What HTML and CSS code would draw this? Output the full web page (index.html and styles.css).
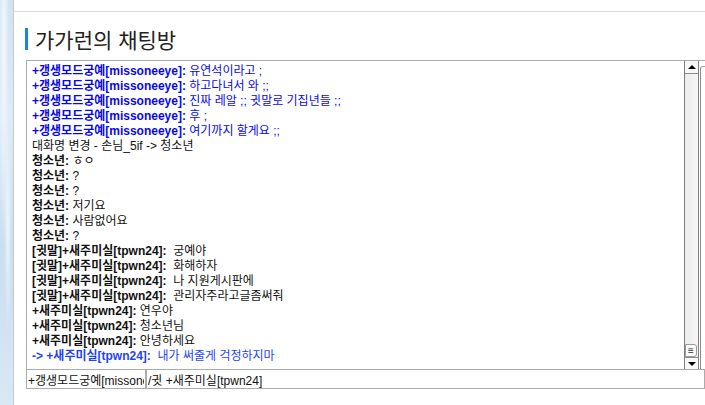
FILE: index.html
```html
<!DOCTYPE html>
<html lang="ko">
<head>
    <meta charset="UTF-8">
    <title>가가런의 채팅방</title>
    <link rel="stylesheet" href="styles.css">
</head>
<body>
    <div class="side-art"></div>
    <div class="page">
        <div class="top-bar"></div>
        <h1 class="room-title">가가런의 채팅방</h1>
        <div class="chat">
            <div class="chat-main">
                <div class="chat-log">
                    <div class="msg notice"><b>+갱생모드궁예[missoneeye]:</b> 유연석이라고 ;</div>
                    <div class="msg notice"><b>+갱생모드궁예[missoneeye]:</b> 하고다녀서 와 ;;</div>
                    <div class="msg notice"><b>+갱생모드궁예[missoneeye]:</b> 진짜 레알 ;; 귓말로 기집년들 ;;</div>
                    <div class="msg notice"><b>+갱생모드궁예[missoneeye]:</b> 후 ;</div>
                    <div class="msg notice"><b>+갱생모드궁예[missoneeye]:</b> 여기까지 할게요 ;;</div>
                    <div class="msg">대화명 변경 - 손님_5if -&gt; 청소년</div>
                    <div class="msg"><b>청소년:</b> ㅎㅇ</div>
                    <div class="msg"><b>청소년:</b> ?</div>
                    <div class="msg"><b>청소년:</b> ?</div>
                    <div class="msg"><b>청소년:</b> 저기요</div>
                    <div class="msg"><b>청소년:</b> 사람없어요</div>
                    <div class="msg"><b>청소년:</b> ?</div>
                    <div class="msg"><b>[귓말]+새주미실[tpwn24]:</b>&nbsp; 궁예야</div>
                    <div class="msg"><b>[귓말]+새주미실[tpwn24]:</b>&nbsp; 화해하자</div>
                    <div class="msg"><b>[귓말]+새주미실[tpwn24]:</b>&nbsp; 나 지원게시판에</div>
                    <div class="msg"><b>[귓말]+새주미실[tpwn24]:</b>&nbsp; 관리자주라고글좀써줘</div>
                    <div class="msg"><b>+새주미실[tpwn24]:</b> 연우야</div>
                    <div class="msg"><b>+새주미실[tpwn24]:</b> 청소년님</div>
                    <div class="msg"><b>+새주미실[tpwn24]:</b> 안녕하세요</div>
                    <div class="msg whisper"><b>-&gt; +새주미실[tpwn24]:</b>&nbsp; 내가 써줄게 걱정하지마</div>
                </div>
                <div class="scrollbar">
                    <div class="sb-btn sb-up"><span class="arrow-up"></span></div>
                    <div class="sb-track"></div>
                    <div class="sb-thumb">&#8801;</div>
                    <div class="sb-btn sb-down"><span class="arrow-down"></span></div>
                </div>
                <div class="user-list"></div>
            </div>
            <div class="chat-input">
                <input class="nick-input" type="text" value="+갱생모드궁예[missoneeye]">
                <input class="msg-input" type="text" value="/귓 +새주미실[tpwn24]">
            </div>
        </div>
    </div>
</body>
</html>
```

FILE: styles.css
```css
html, body {
    height: 100%;
}
body {
    margin: 0;
    display: flex;
    overflow: hidden;
    background: #fff;
    color: #111;
    font-family: "Liberation Sans", "Noto Sans CJK KR", sans-serif;
}
.side-art {
    width: 13px;
    flex: none;
    border-right: 1px solid #c9c9c9;
    background:
        radial-gradient(ellipse at 30% 12%, #f3f8fc 0, rgba(243,248,252,0) 40%),
        radial-gradient(ellipse at 60% 55%, #eef5fb 0, rgba(238,245,251,0) 35%),
        linear-gradient(180deg, #cfe3f3 0%, #dcebf7 30%, #c9def0 60%, #d8e8f5 100%);
}
.page {
    flex: 1;
    min-width: 0;
    overflow: hidden;
}
.top-bar {
    height: 11px;
    border-bottom: 1px solid #dcdcdc;
}
.room-title {
    margin: 16px 0 0 11px;
    padding-left: 7px;
    border-left: 3px solid #1b86d3;
    font-family: "Noto Sans CJK KR", sans-serif;
    font-size: 21px;
    font-weight: normal;
    line-height: 22px;
    color: #222;
}
.chat {
    margin: 10px 0 0 12px;
}
.chat-main {
    display: flex;
    height: 308px;
    border-top: 1px solid #ababab;
    border-left: 1px solid #ababab;
}
.chat-log {
    width: 657px;
    flex: none;
    padding: 3px 5px;
    box-sizing: border-box;
    overflow: hidden;
    font-size: 12px;
    line-height: 15px;
}
.msg {
    white-space: nowrap;
}
.msg.notice {
    color: #0808ee;
}
.msg.whisper {
    color: #1f44f5;
}
.scrollbar {
    width: 15px;
    flex: none;
    box-sizing: border-box;
    display: flex;
    flex-direction: column;
    border-left: 1px solid #7d7d7d;
    border-right: 1px solid #7d7d7d;
    background: #f2f2f2;
}
.sb-btn {
    height: 12px;
    display: flex;
    align-items: center;
    justify-content: center;
    background: #f7f7f7;
}
.sb-up {
    border-bottom: 1px solid #8a8a8a;
}
.sb-down {
    border-top: 1px solid #8a8a8a;
    height: 11px;
}
.arrow-up {
    border-left: 4px solid transparent;
    border-right: 4px solid transparent;
    border-bottom: 4px solid #000;
}
.arrow-down {
    border-left: 4px solid transparent;
    border-right: 4px solid transparent;
    border-top: 4px solid #000;
}
.sb-track {
    flex: 1;
    background: linear-gradient(90deg, #ececec, #f6f6f6);
}
.sb-thumb {
    height: 11px;
    margin-right: 1px;
    border: 1px solid #9a9a9a;
    border-radius: 0 3px 3px 0;
    background: #fafafa;
    font-size: 10px;
    line-height: 11px;
    text-align: center;
    color: #333;
}
.user-list {
    flex: 1;
    min-width: 0;
    margin: 5px 0 0 1px;
    border-top: 1px solid #a0a0a0;
    border-left: 1px solid #8a8a8a;
    border-radius: 3px 0 0 0;
}
.chat-input {
    display: flex;
    height: 19px;
    border-bottom: 1px solid #ababab;
}
.chat-input input {
    margin: 0;
    padding: 0 1px;
    height: 19px;
    box-sizing: border-box;
    border: 1px solid #ababab;
    border-bottom: none;
    font-family: "Liberation Sans", "Noto Sans CJK KR", sans-serif;
    font-size: 12px;
    color: #111;
    background: #fff;
    outline: none;
}
.nick-input {
    width: 120px;
    flex: none;
}
.msg-input {
    flex: 1;
    min-width: 0;
    border-left: none;
}
```
